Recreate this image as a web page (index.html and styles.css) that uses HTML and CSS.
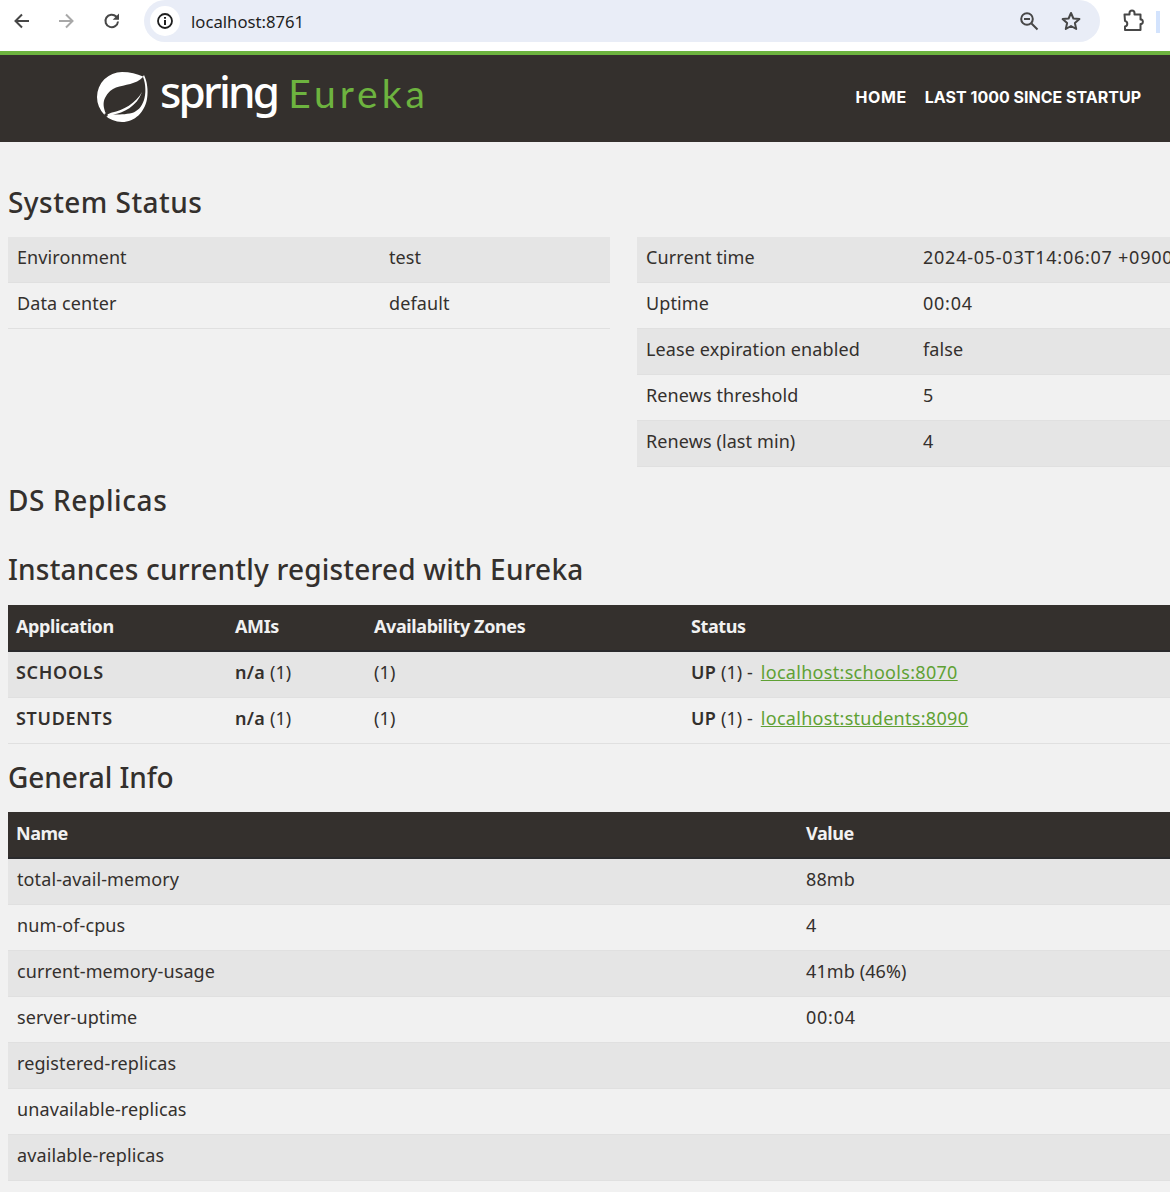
FILE: index.html
```html
<!DOCTYPE html>
<html lang="en">
<head>
<meta charset="utf-8">
<title>Eureka</title>
<link rel="stylesheet" href="styles.css">
</head>
<body>
<div class="chrome">
  <svg class="ico back" width="20" height="20" viewBox="0 0 20 20"><path d="M17 10H4M10 3.500L3.500 10l6.500 6.500" fill="none" stroke="#474747" stroke-width="2"/></svg>
  <svg class="ico fwd" width="20" height="20" viewBox="0 0 20 20"><path d="M3 10h13M10 3.500l6.500 6.500-6.500 6.500" fill="none" stroke="#a8a8a8" stroke-width="2"/></svg>
  <svg class="ico reload" width="20" height="20" viewBox="0 0 20 20"><path d="M16 10.500a6.300 6.300 0 1 1-1.800-5L16 7.500" fill="none" stroke="#474747" stroke-width="2"/><path d="M17 2.500v6.300h-6.300z" fill="#474747"/></svg>
  <div class="omni">
    <span class="info"><svg width="18" height="18" viewBox="0 0 18 18"><circle cx="9" cy="9" r="7" fill="none" stroke="#1f1f1f" stroke-width="1.800"/><path d="M9 8v5M9 5v1.800" stroke="#1f1f1f" stroke-width="2"/></svg></span>
    <span class="url">localhost:8761</span>
    <svg class="zoomi" width="20" height="20" viewBox="0 0 20 20"><circle cx="8" cy="8" r="5.800" fill="none" stroke="#474747" stroke-width="2"/><path d="M5 8h6M12.500 12.500l6 6" stroke="#474747" stroke-width="2"/></svg>
    <svg class="star" width="22" height="22" viewBox="0 0 22 22"><path d="M11 3l2.400 5.500 6 .6-4.500 4 1.300 5.900L11 16l-5.200 3 1.300-5.900-4.500-4 6-.6z" fill="none" stroke="#474747" stroke-width="2" stroke-linejoin="round"/></svg>
  </div>
  <svg class="ext" width="24" height="24" viewBox="0 0 24 24"><path d="M3.500 6.500h5V5a2.500 2.500 0 0 1 5 0v1.500h6v5h1a2.500 2.500 0 0 1 0 4.500h-1v6h-15.500v-3.500a2.800 2.800 0 0 0 0-5.500z" transform="translate(0 -1)" fill="none" stroke="#474747" stroke-width="2" stroke-linejoin="round"/></svg>
  <span class="sliver"></span>
</div>
<nav class="navbar">
  <div class="brand">
    <svg class="leaf" width="53" height="52" viewBox="0 0 53 52"><path d="M46 5.500l1-1.500c3 6 4.500 15 3 24-2.300 13-12 23-25 23A25 25 0 1 1 25 1c8 0 15 1.800 21 4.500z" fill="#fff"/><path d="M9 43C6 36 6 31 8 27c3-6 7-9 11-10.500 9-3 20-3 27-10.500 3 7 3 17 1 23-2.500 7-6 11-12 13-6 1.500-14 1.500-19 1.500 10-1.500 24-8 29-22.500-6 11-19 18.500-30 20.500-2 .5-4 2-6 2z" fill="#34302d"/><circle cx="9" cy="44" r="1.800" fill="#34302d"/></svg>
    <span class="spring">spring</span>
    <span class="eureka">Eureka</span>
  </div>
  <ul class="links">
    <li class="home">HOME</li>
    <li>LAST 1000 SINCE STARTUP</li>
  </ul>
</nav>
<main class="content">
  <h1 class="h-status">System Status</h1>
  <div class="cols">
    <table class="tbl env">
      <tr class="odd"><td class="c1">Environment</td><td>test</td></tr>
      <tr class="even"><td class="c1">Data center</td><td>default</td></tr>
    </table>
    <table class="tbl time">
      <tr class="odd"><td class="c2">Current time</td><td class="num">2024-05-03T14:06:07 +0900</td></tr>
      <tr class="even"><td class="c2">Uptime</td><td class="num">00:04</td></tr>
      <tr class="odd"><td class="c2">Lease expiration enabled</td><td>false</td></tr>
      <tr class="even"><td class="c2">Renews threshold</td><td>5</td></tr>
      <tr class="odd"><td class="c2">Renews (last min)</td><td>4</td></tr>
    </table>
  </div>
  <h1 class="h-ds">DS Replicas</h1>
  <h1 class="h-inst">Instances currently registered with Eureka</h1>
  <table class="tbl full alt">
    <tr class="head"><th class="a1">Application</th><th class="a2">AMIs</th><th class="a3">Availability Zones</th><th>Status</th></tr>
    <tr class="odd"><td><b class="app">SCHOOLS</b></td><td><b>n/a</b> (1)</td><td>(1)</td><td><b>UP</b> (1) - <a href="#">localhost:schools:8070</a></td></tr>
    <tr class="even"><td><b class="app">STUDENTS</b></td><td><b>n/a</b> (1)</td><td>(1)</td><td><b>UP</b> (1) - <a href="#">localhost:students:8090</a></td></tr>
  </table>
  <h1 class="h-gen">General Info</h1>
  <table class="tbl full">
    <tr class="head"><th class="g1">Name</th><th>Value</th></tr>
    <tr class="odd"><td>total-avail-memory</td><td>88mb</td></tr>
    <tr class="even"><td>num-of-cpus</td><td>4</td></tr>
    <tr class="odd"><td>current-memory-usage</td><td>41mb (46%)</td></tr>
    <tr class="even"><td>server-uptime</td><td class="num">00:04</td></tr>
    <tr class="odd"><td>registered-replicas</td><td></td></tr>
    <tr class="even"><td>unavailable-replicas</td><td></td></tr>
    <tr class="odd"><td>available-replicas</td><td></td></tr>
  </table>
</main>
</body>
</html>
```
FILE: styles.css
```css
* { box-sizing: border-box; }
html, body { margin: 0; padding: 0; }
body { width: 1170px; height: 1192px; overflow: hidden; background: #f1f1f1; color: #34302d; font-family: "Noto Sans", "Lato", sans-serif; font-size: 18px; letter-spacing: .1px; }
.chrome { height: 51px; background: #fff; display: flex; align-items: flex-start; letter-spacing: 0; }
.ico { flex: none; margin-top: 11px; }
.back { margin-left: 12px; }
.fwd { margin-left: 24px; }
.reload { margin-left: 26px; }
.omni { margin-left: 22px; width: 956px; height: 42px; background: #e9edf7; border-radius: 21px; display: flex; align-items: center; padding-left: 6px; }
.info { width: 30px; height: 30px; border-radius: 50%; background: #fff; display: flex; align-items: center; justify-content: center; }
.url { margin-left: 11px; font-family: "Noto Sans", sans-serif; font-size: 16.700px; color: #1f1f1f; flex: 1; }
.zoomi { margin-right: 21px; }
.star { margin-right: 18px; }
.ext { margin-left: 21px; margin-top: 9px; flex: none; }
.sliver { width: 4px; height: 22px; background: #d3e3fd; margin-left: 11px; margin-top: 11px; }
.navbar { height: 91px; background: #34302d; border-top: 4px solid #6db33f; display: flex; justify-content: space-between; letter-spacing: 0; }
.brand { display: flex; align-items: baseline; margin-left: 97px; height: 72px; }
.leaf { align-self: flex-start; margin-top: 16px; }
.spring { font-family: "Noto Sans", sans-serif; font-weight: 500; font-size: 44px; color: #fff; margin-left: 10px; letter-spacing: -2.800px; line-height: 72px; }
.eureka { font-family: "Lato", sans-serif; font-size: 39px; color: #6db33f; margin-left: 11px; letter-spacing: 4px; line-height: 74px; }
.links { list-style: none; margin: 0; padding: 0 29px 0 0; display: flex; gap: 18px; height: 84px; align-items: center; font-family: "Inter", sans-serif; font-weight: 700; font-size: 16px; color: #fff; }
.home { letter-spacing: .6px; }
.content { padding: 0 0 0 8px; }
h1 { font-weight: 500; font-size: 28px; margin: 0; color: #34302d; line-height: 36px; letter-spacing: .2px; }
.h-status { padding-top: 42px; padding-bottom: 17px; letter-spacing: .45px; }
.cols { display: flex; gap: 27px; align-items: flex-start; }
.tbl { border-collapse: separate; border-spacing: 0; }
.tbl td, .tbl th { padding: 0 0 6px 9px; height: 46px; text-align: left; vertical-align: middle; border-bottom: 1px solid #e0e0e0; white-space: nowrap; overflow: hidden; }
.odd { background: #e5e5e5; }
.env { width: 602px; flex: none; }
.c1 { width: 372px; }
.time { width: 533px; flex: none; table-layout: fixed; }
.c2 { width: 277px; }
.tbl .num { letter-spacing: .75px; }
.h-ds { padding-top: 15px; padding-bottom: 15px; letter-spacing: .6px; }
.h-inst { padding-top: 18px; padding-bottom: 18px; }
.full { width: 1162px; }
.head { background: #34302d; color: #f1f1f1; }
.tbl th { height: 47px; padding-bottom: 4px; border-bottom: 2px solid #2a2a2c; font-weight: 700; letter-spacing: -.4px; }
.a1 { width: 219px; }
.a2 { width: 139px; }
.a3 { width: 317px; }
.tbl .g1 { width: 789px; padding-left: 8px; letter-spacing: -.5px; }
.alt td { padding-left: 8px; }
.alt th { padding-left: 8px; }
b { font-weight: 600; letter-spacing: .3px; }
.app { letter-spacing: .7px; }
a { color: #5fa134; text-decoration: underline; letter-spacing: .3px; margin-left: 3px; }
.h-gen { padding-top: 15px; padding-bottom: 17px; letter-spacing: -.1px; }
```
